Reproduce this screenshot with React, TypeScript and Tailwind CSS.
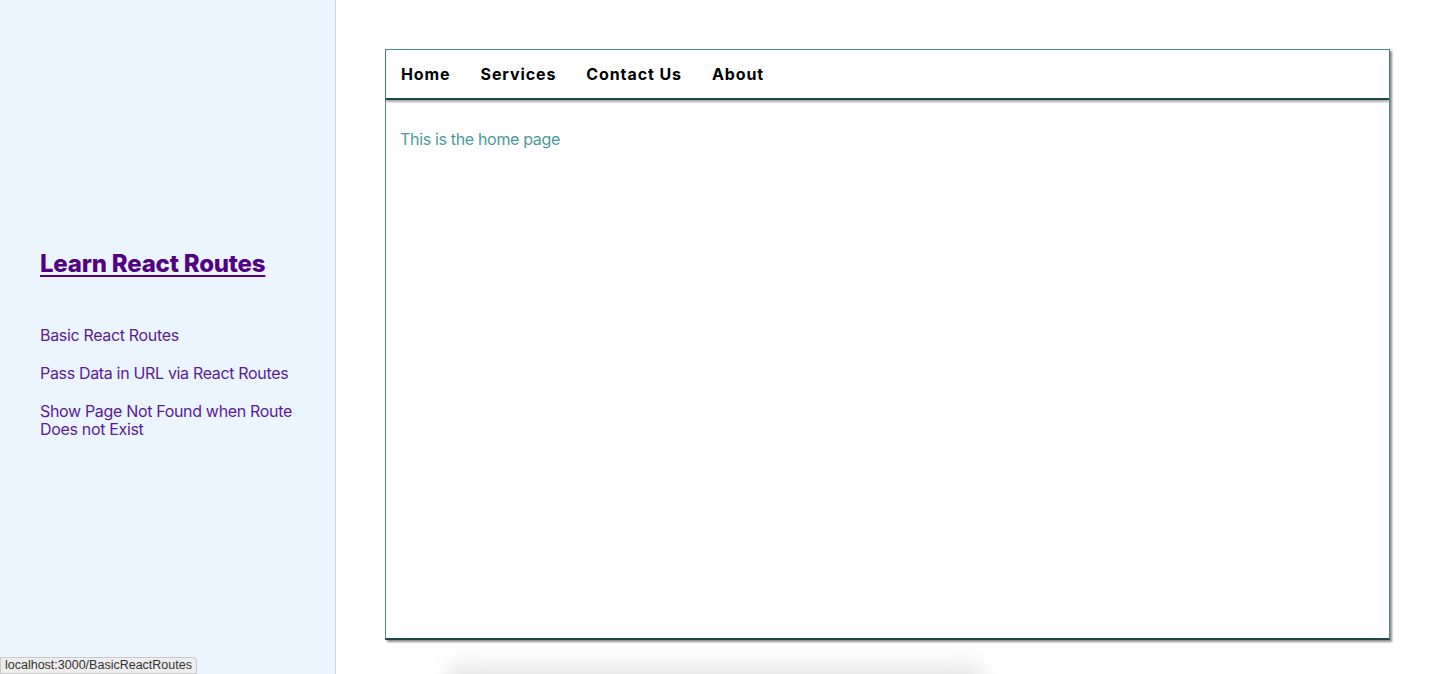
import React from 'react'

const sideLinks = [
  'Basic React Routes',
  'Pass Data in URL via React Routes',
  'Show Page Not Found when Route Does not Exist',
]

const navLinks = ['Home', 'Services', 'Contact Us', 'About']

export default function App() {
  return (
    <div className="relative flex h-[674px] w-[1438px] overflow-hidden bg-white font-['Inter',sans-serif]">
      <aside className="flex w-[336px] shrink-0 flex-col justify-center border-r border-[#d4d6d9] bg-[#ebf5ff] pt-[13px] pl-10 pr-6">
        <a href="#" className="text-[24px] font-extrabold leading-[30px] tracking-[-0.2px] text-[#520084] underline decoration-2 underline-offset-[3px]">
          Learn React Routes
        </a>
        <ul className="mt-[47px] flex flex-col gap-5">
          {sideLinks.map((l) => (
            <li key={l}>
              <a href="#" className="block text-[16px] leading-[18px] tracking-[-0.33px] text-[#5b1a98]">
                {l}
              </a>
            </li>
          ))}
        </ul>
      </aside>

      <main className="flex-1 pl-[49px] pr-12 pt-[49px]">
        <div className="flex h-[591px] flex-col border border-[#4a8c8c] border-b-2 border-b-[#1d4848] bg-white shadow-[2px_2px_2px_rgba(0,0,0,0.45)]">
          <nav className="flex h-[50px] shrink-0 items-center border-b-2 border-[#1d4848] shadow-[0_2px_2px_rgba(0,0,0,0.35)]">
            {navLinks.map((n) => (
              <a
                key={n}
                href="#"
                className="px-[15px] text-[16px] font-bold tracking-[0.9px] text-black"
              >
                {n}
              </a>
            ))}
          </nav>
          <div className="px-[14px] pt-[27px] text-[16px] leading-[24px] tracking-[-0.33px] text-[#4a9a9a]">
            This is the home page
          </div>
        </div>
        <div className="ml-[60px] mt-[24px] h-[30px] w-[540px] rounded-full bg-[#e6e6e6] blur-[10px]" />
      </main>

      <div className="absolute bottom-0 left-0 rounded-tr-[4px] border border-[#c8c8c8] bg-[#ededed] px-[4px] text-[12.5px] leading-[15px] text-[#333] font-['Liberation_Sans',sans-serif]">
        localhost:3000/BasicReactRoutes
      </div>
    </div>
  )
}
